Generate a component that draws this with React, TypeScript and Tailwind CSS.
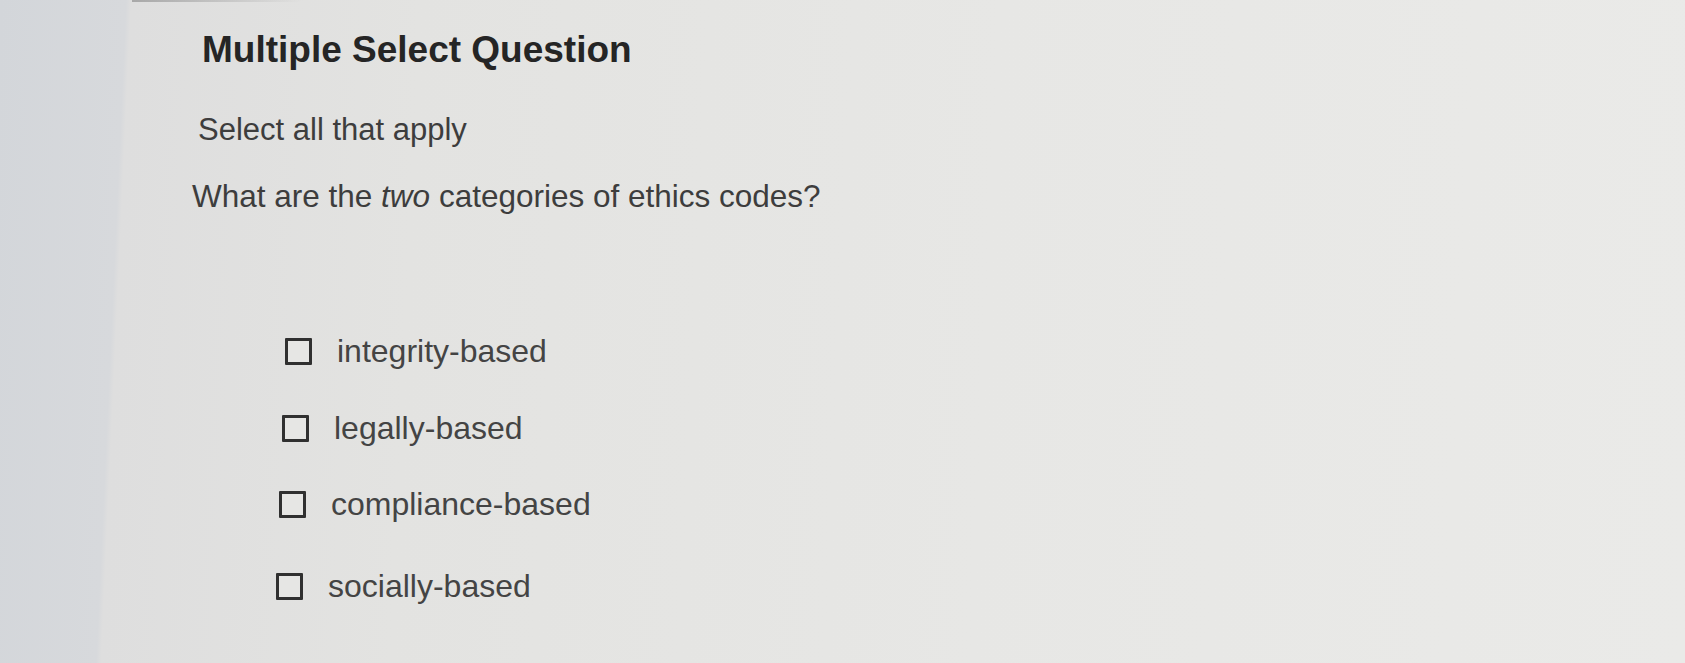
import React from "react";

interface OptionProps {
  label: string;
  indent: string;
  spacing: string;
}

const options: OptionProps[] = [
  { label: "integrity-based", indent: "ml-[285px]", spacing: "mt-[123px]" },
  { label: "legally-based", indent: "ml-[282px]", spacing: "mt-[45px]" },
  { label: "compliance-based", indent: "ml-[279px]", spacing: "mt-[44px]" },
  { label: "socially-based", indent: "ml-[276px]", spacing: "mt-[50px]" },
];

function Option_Row(props: OptionProps) {
  const [checked, setChecked] = React.useState<boolean>(false);

  return (
    <label
      className={`${props.indent} ${props.spacing} flex flex-row items-center gap-[25px] h-[32px] cursor-pointer`}
    >
      <span
        onClick={() => setChecked(!checked)}
        className={`${
          checked ? "bg-[#3a3a3a]" : "bg-[#e6e6e4]"
        } w-[27px] h-[27px] shrink-0 border-[3px] border-[#303030] rounded-[1px]`}
      />
      <span className="text-[32px] leading-[32px] text-[#444444]">
        {props.label}
      </span>
    </label>
  );
}

export default function App() {
  return (
    <div
      className="h-[663px] w-full overflow-hidden flex flex-col bg-[linear-gradient(92.6deg,#d3d6da_0px,#d7d9dc_126px,#dedede_131px,#e3e3e1_420px,#e7e7e5_1000px,#eaeae8_100%)]"
      style={{ fontFamily: '"Liberation Sans", Arial, sans-serif' }}
    >
      <div className="ml-[132px] w-[170px] h-[2px] bg-linear-to-r from-[#a8a8a8] to-transparent" />

      <h1 className="ml-[202px] mt-[29px] text-[37px] leading-[37px] font-bold text-[#252525]">
        Multiple Select Question
      </h1>

      <p className="ml-[198px] mt-[46px] text-[31px] leading-[31px] text-[#3d3d3d]">
        Select all that apply
      </p>

      <p className="ml-[192px] mt-[36px] text-[31.5px] leading-[31px] text-[#3d3d3d]">
        What are the <i>two</i> categories of ethics codes?
      </p>

      {options.map((option) => (
        <Option_Row key={option.label} {...option} />
      ))}
    </div>
  );
}
